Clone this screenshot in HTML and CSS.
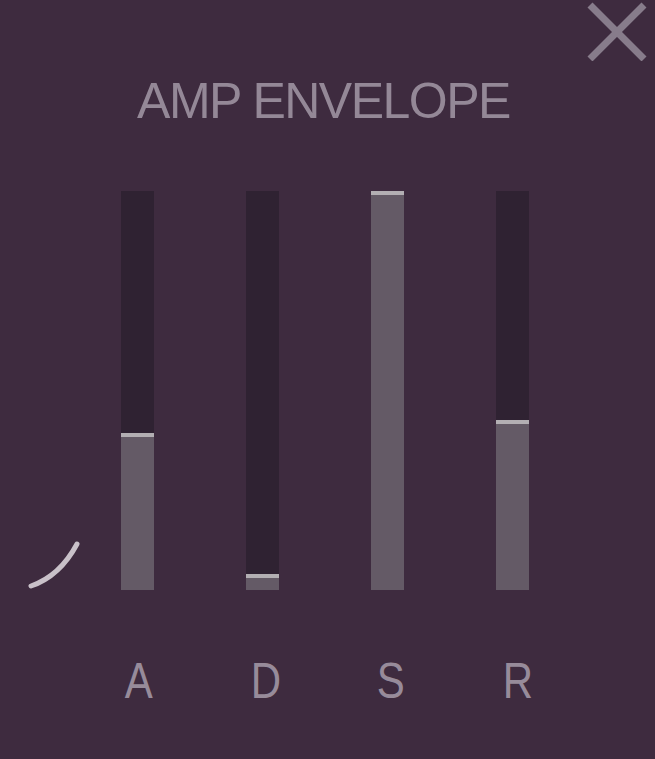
FILE: index.html
```html
<html>
<head>
  <meta charset="utf-8">
  <link rel="stylesheet" href="styles.css">
</head>
<body>
  <div class="panel">
    <!-- кнопка закрытия -->
    <svg class="close" width="60" height="60" viewBox="0 0 60 60">
      <line x1="3" y1="4" x2="57" y2="58" />
      <line x1="57" y1="4" x2="3" y2="58" />
    </svg>

    <div class="title">AMP ENVELOPE</div>

    <div class="sliders">
      <!-- кривая атаки -->
      <svg class="curve" width="56" height="60" viewBox="0 0 56 60">
        <path d="M5 56 Q34 46 51 14" />
      </svg>
      <div class="track"><div class="fill" style="height:157px"></div></div>
      <div class="track"><div class="fill" style="height:16px"></div></div>
      <div class="track"><div class="fill" style="height:399px"></div></div>
      <div class="track"><div class="fill" style="height:170px"></div></div>
    </div>

    <div class="labels">
      <span class="lbl">A</span>
      <span class="lbl">D</span>
      <span class="lbl">S</span>
      <span class="lbl">R</span>
    </div>
  </div>
</body>
</html>
```

FILE: styles.css
```css
body {
	margin: 0;
	background-color: #3e2b3f;
	font-family: "Liberation Sans", Arial, sans-serif;
}
.panel {
	position: relative;
	width: 655px;
	height: 759px;
}
.close {
	position: absolute;
	top: 1px;
	right: 8px;
}
.close line {
	stroke: #877c8b;
	stroke-width: 7;
}
.title {
	padding-top: 76px;
	padding-right: 8px;
	height: 50px;
	line-height: 50px;
	font-size: 50px;
	color: #948897;
	text-align: center;
	letter-spacing: -1.5px;
}
.sliders {
	display: flex;
	align-items: flex-end;
	margin-top: 65px;
	padding-left: 26px;
	gap: 92px;
}
.curve {
	margin-right: -53px;
}
.curve path {
	fill: none;
	stroke: #c9c1c9;
	stroke-width: 5;
	stroke-linecap: round;
}
.track {
	display: flex;
	flex-direction: column;
	justify-content: flex-end;
	width: 33px;
	height: 399px;
	background-color: #2f2232;
}
.fill {
	box-sizing: border-box;
	background-color: #645a66;
	border-top: 4px solid #b3afb3;
}
.labels {
	display: flex;
	margin-top: 66px;
	padding-left: 122px;
	gap: 93px;
}
.lbl {
	width: 33px;
	height: 50px;
	line-height: 50px;
	font-size: 50px;
	color: #978b9a;
	text-align: center;
	transform: scaleX(0.84);
}
```
